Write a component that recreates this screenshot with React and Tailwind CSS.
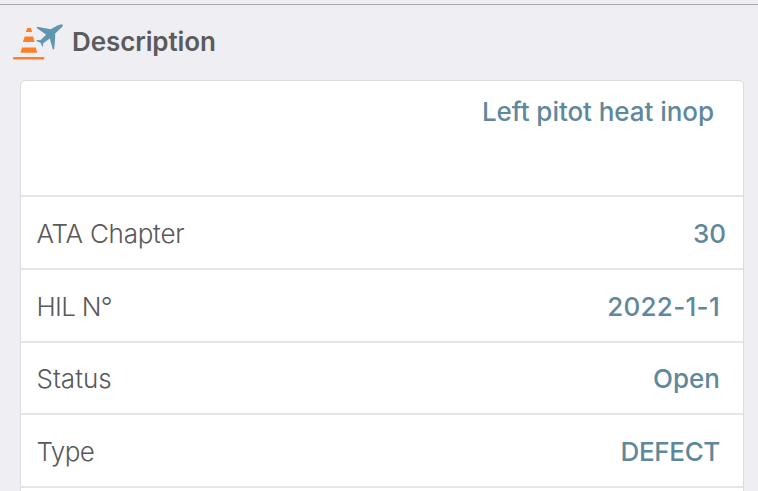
const rows = [
  { label: "ATA Chapter", value: "30", row: "h-[73px] pr-[17px] pt-[3px]", labelClass: "tracking-[-0.25px]", valueClass: "" },
  { label: "HIL N°", value: "2022-1-1", row: "h-[73px] pr-[23px] pt-[2px]", labelClass: "tracking-[-0.7px]", valueClass: "tracking-[0.3px]" },
  { label: "Status", value: "Open", row: "h-[72px] pr-[23px] pt-[2px]", labelClass: "", valueClass: "" },
  { label: "Type", value: "DEFECT", row: "h-[73px] pr-[23px] pt-[2px]", labelClass: "tracking-[-0.6px]", valueClass: "tracking-[-0.35px]" },
];

function HeaderIcon() {
  return (
    <svg width="50" height="36" viewBox="0 0 50 36" className="shrink-0">
      <g fill="#fb8028">
        <path d="M14.1 4h3.8l1.200 4h-6.2z" />
        <path d="M11.7 12.500h8.400l1.500 5.500H9.900z" />
        <path d="M9 23.500h13.700l1.500 5.300H7.400z" />
        <rect x="0" y="33" width="31.300" height="2.400" rx="1" />
      </g>
      <path
        fill="#6096b0"
        d="M49.900 1c.2 1.100-1.400 2.600-2.700 3.700L42.200 9.600c.1 4-.4 10.500-1.100 15.700l-1.200.3L36.800 14.400l-6.600 4.900-.2 3-.9.200-1.300-3.500-4.200-2 .3-1 3.500.2 5.800-5.500L23.800 3.900l.3-1.100 13.600 2.500L43.500 1.900C46 .7 48.800-.1 49.900 1z"
      />
    </svg>
  );
}

export default function App() {
  return (
    <div className="h-[491px] w-[758px] overflow-hidden bg-[#efeef3] pt-1 font-['Inter',sans-serif] text-[26px] leading-8">
      <div className="h-px bg-[#aaa9ad]" />

      <div className="flex h-[75px] items-start pl-[13px] pt-[19px]">
        <HeaderIcon />
        <h1 className="ml-[9px] mt-0.5 font-semibold tracking-[-0.1px] text-[#5b5b5d]">Description</h1>
      </div>

      <div className="mx-5 h-[420px] w-[724px] rounded-t-[5px] border border-[#dbdbdd] bg-white">
        <div className="flex h-[116px] items-start justify-end border-b-2 border-[#e5e5e7] pr-[29px] pt-[15px]">
          <span className="font-medium tracking-[-0.05px] text-[#5f889c]">Left pitot heat inop</span>
        </div>
        {rows.map(({ label, value, row, labelClass, valueClass }) => (
          <div
            key={label}
            className={`flex items-center justify-between border-b-2 border-[#e5e5e7] pl-[15.5px] ${row}`}
          >
            <span className={`font-light text-[#59595b] ${labelClass}`}>{label}</span>
            <span className={`font-medium text-[#5f889c] ${valueClass}`}>{value}</span>
          </div>
        ))}
      </div>
    </div>
  );
}
